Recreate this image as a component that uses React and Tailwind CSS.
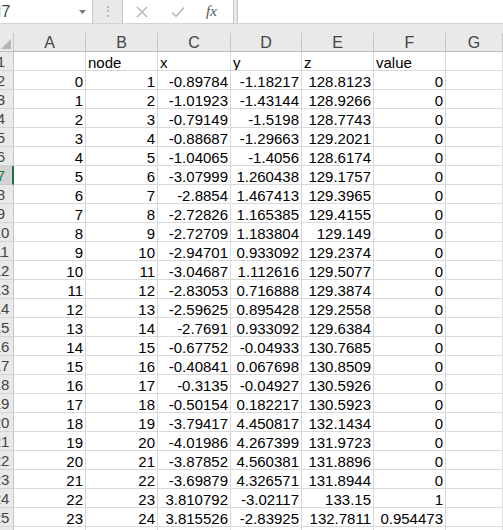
const rows = [
  ["", "node", "x", "y", "z", "value"],
  [0, 1, "-0.89784", "-1.18217", "128.8123", "0"],
  [1, 2, "-1.01923", "-1.43144", "128.9266", "0"],
  [2, 3, "-0.79149", "-1.5198", "128.7743", "0"],
  [3, 4, "-0.88687", "-1.29663", "129.2021", "0"],
  [4, 5, "-1.04065", "-1.4056", "128.6174", "0"],
  [5, 6, "-3.07999", "1.260438", "129.1757", "0"],
  [6, 7, "-2.8854", "1.467413", "129.3965", "0"],
  [7, 8, "-2.72826", "1.165385", "129.4155", "0"],
  [8, 9, "-2.72709", "1.183804", "129.149", "0"],
  [9, 10, "-2.94701", "0.933092", "129.2374", "0"],
  [10, 11, "-3.04687", "1.112616", "129.5077", "0"],
  [11, 12, "-2.83053", "0.716888", "129.3874", "0"],
  [12, 13, "-2.59625", "0.895428", "129.2558", "0"],
  [13, 14, "-2.7691", "0.933092", "129.6384", "0"],
  [14, 15, "-0.67752", "-0.04933", "130.7685", "0"],
  [15, 16, "-0.40841", "0.067698", "130.8509", "0"],
  [16, 17, "-0.3135", "-0.04927", "130.5926", "0"],
  [17, 18, "-0.50154", "0.182217", "130.5923", "0"],
  [18, 19, "-3.79417", "4.450817", "132.1434", "0"],
  [19, 20, "-4.01986", "4.267399", "131.9723", "0"],
  [20, 21, "-3.87852", "4.560381", "131.8896", "0"],
  [21, 22, "-3.69879", "4.326571", "131.8944", "0"],
  [22, 23, "3.810792", "-3.02117", "133.15", "1"],
  [23, 24, "3.815526", "-2.83925", "132.7811", "0.954473"],
  ["", "", "", "", "", ""],
]

const cols = ["A", "B", "C", "D", "E", "F", "G"]
const grid = "grid grid-cols-[14px_72px_72px_73px_71px_72px_72px_1fr]"

export default function App() {
  return (
    <div className="w-[503px] h-[530px] overflow-hidden bg-white text-[15px] leading-[15px] text-black font-['Liberation_Sans',Arial,sans-serif]">
      {/* formula bar */}
      <div className="flex h-[24px] bg-[#e9e9e9] border-b border-[#d4d4d4]">
        <div className="w-[93px] bg-white border-r border-[#c6c6c6] flex items-center justify-between">
          <span className="-ml-[3px] text-[16px] text-[#444]">I7</span>
          <svg width="9" height="6" viewBox="0 0 9 6" className="mr-[5px]">
            <path d="M1 1h7L4.5 5z" fill="#777" />
          </svg>
        </div>
        <div className="w-[29px] flex items-center justify-center text-[#aaa] text-[14px]">⋮</div>
        <div className="w-[112px] bg-white border-x border-[#c6c6c6] flex items-center">
          <svg width="12" height="12" viewBox="0 0 12 12" className="ml-[13px]">
            <path d="M1 1l10 10M11 1L1 11" stroke="#b4b4b4" strokeWidth="1.4" />
          </svg>
          <svg width="14" height="12" viewBox="0 0 14 12" className="ml-[23px]">
            <path d="M1 6.5l4 4L13 1.5" stroke="#b4b4b4" strokeWidth="1.5" fill="none" />
          </svg>
          <span className="ml-[21px] italic text-[15px] text-[#555] font-['Liberation_Serif',serif]">fx</span>
        </div>
        <div className="w-[3px]" />
        <div className="flex-1 bg-white border-l border-[#c6c6c6]" />
      </div>
      <div className="h-[9px] bg-[#e9e9e9]" />

      {/* column headers */}
      <div className={`${grid} h-[19px] bg-[#e9e9e9] border-b border-[#bdbdbd]`}>
        <div className="border-r border-[#c6c6c6] flex items-end justify-end pb-[2px] pr-[2px]">
          <svg width="10" height="10" viewBox="0 0 10 10">
            <path d="M10 0v10H0z" fill="#b5b5b5" />
          </svg>
        </div>
        {cols.map((c) => (
          <div key={c} className="border-r border-[#c6c6c6] flex items-center justify-center text-[16px] text-[#444]">
            {c}
          </div>
        ))}
      </div>

      {/* rows */}
      {rows.map((r, i) => {
        const active = i === 6
        return (
          <div key={i} className={`${grid} h-[19px]`}>
            <div
              className={`overflow-hidden flex items-end pb-[1px] border-b ${
                active
                  ? "bg-[#d3d3d3] border-r-2 border-r-[#217346] border-b-[#c6c6c6] text-[#217346]"
                  : "bg-[#e9e9e9] border-r border-r-[#c6c6c6] border-b-[#d4d4d4] text-[#444]"
              }`}
            >
              <div className="w-[26px] -ml-[12px] shrink-0 text-center">{i + 1}</div>
            </div>
            {r.map((v, j) => (
              <div
                key={j}
                className={`border-r border-b border-[#dadada] flex items-end whitespace-nowrap overflow-hidden ${
                  i === 0 ? "justify-start pl-[2px]" : "justify-end pr-[2px]"
                }`}
              >
                {v}
              </div>
            ))}
            <div className="border-r border-b border-[#dadada]" />
          </div>
        )
      })}
    </div>
  )
}
